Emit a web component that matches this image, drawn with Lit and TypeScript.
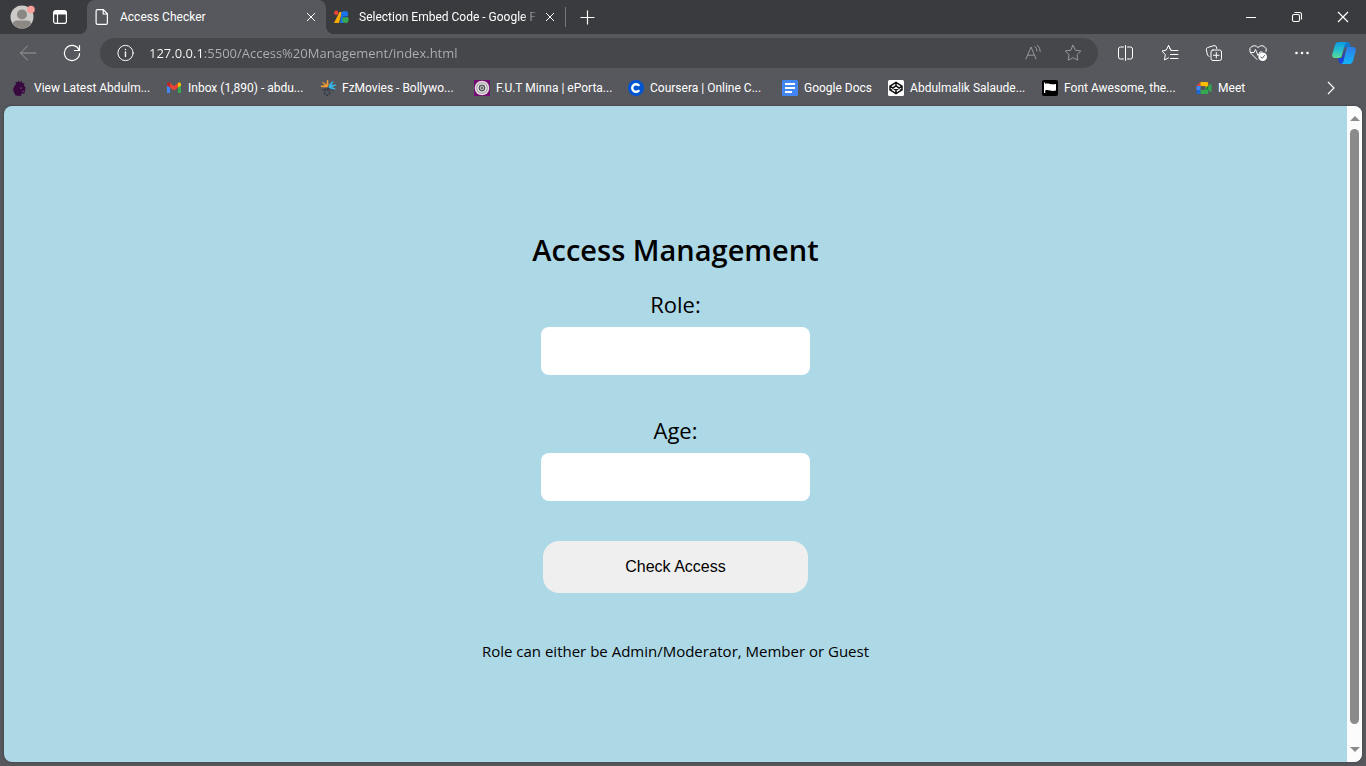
import { LitElement, html, css, svg, nothing, TemplateResult } from "lit";
import { customElement, state } from "lit/decorators.js";

interface Bookmark {
  label: string;
  long: boolean;
  icon: TemplateResult;
}

const bookmarks: Bookmark[] = [
  {
    label: "View Latest Abdulm...",
    long: true,
    icon: svg`<path fill="#37093f" d="M4 4 3.500 1.500 5.500 2.500 6.500 0.500 8 2.200 10 1 10.200 3.200 12.500 3 11.800 5.200 13.500 7.500 13 10 12.500 13.500 9.500 13.500 9 16 3.500 15.500 1.800 12 1 9 2.500 6Z"/><path fill="#6d3a73" d="M8 7.500h2v1.200H8zM10 11h2v1h-2z"/>`,
  },
  {
    label: "Inbox (1,890) - abdu...",
    long: true,
    icon: svg`<path fill="#4285f4" d="M1 4.500v8.500h3V7z"/><path fill="#34a853" d="M15 4.500v8.500h-3V7z"/><path fill="#c5221f" d="M1 4.500C1 2.500 3 2 4.200 3L4 7.500 1 5.500z"/><path fill="#fbbc04" d="M15 4.500c0-2-2-2.500-3.200-1.500L12 7.500l3-2z"/><path fill="#ea4335" d="m4 3 4 3.200L12 3v4.500l-4 3-4-3z"/>`,
  },
  {
    label: "FzMovies - Bollywo...",
    long: true,
    icon: svg`<path fill="#f29a38" d="M7.500 7.500 1 7l-.5-1.200L5 5 2 2.500l1-.5 3.500 2.500L7 0h1.200l.3 5z"/><path fill="#36b5e8" d="m8.500 8 1-4 3.500-3 .5 1-2.300 3L16 4.500v1L12 7l3.500 1.500-.3 1L10 9z"/><path fill="none" stroke="#36424f" stroke-width="1.300" d="m8 8-6 2m6-2 6 3"/><circle cx="7" cy="12.500" r="2.600" fill="none" stroke="#303945" stroke-width="1.600" stroke-dasharray="2 1"/>`,
  },
  {
    label: "F.U.T Minna | ePorta...",
    long: true,
    icon: svg`<path fill="#730b72" d="M0 0h16v16H0z"/><circle cx="8" cy="8" r="7.300" fill="#e2dcd8"/><circle cx="8" cy="8" r="5.200" fill="#fff" stroke="#a39ca8" stroke-width="1.200"/><circle cx="8" cy="8" r="2.800" fill="#bbb" stroke="#4c4c55" stroke-width="1.200"/><circle cx="8" cy="8" r="1" fill="#444"/>`,
  },
  {
    label: "Coursera | Online C...",
    long: true,
    icon: svg`<circle cx="8" cy="8" r="8" fill="#0056d2"/><path fill="none" stroke="#fff" stroke-width="2.400" d="M11.200 5.900a3.800 3.800 0 1 0 0 4.200"/>`,
  },
  {
    label: "Google Docs",
    long: false,
    icon: svg`<rect width="16" height="16" rx="1.500" fill="#4285f4"/><path stroke="#fff" stroke-width="1.800" d="M3 4h10M3 8h10M3 12h7"/>`,
  },
  {
    label: "Abdulmalik Salaude...",
    long: true,
    icon: svg`<rect width="16" height="16" rx="1.500" fill="#fff"/><path fill="none" stroke="#111" stroke-width="1.500" stroke-linejoin="round" d="m8 2.300 6 3.800v3.800l-6 3.800-6-3.800V6.100zM8 2.300v3.500M8 10.200v3.500M2 6.100l6 4.100 6-4.100M2 9.900l6-4.100 6 4.100"/>`,
  },
  {
    label: "Font Awesome, the...",
    long: true,
    icon: svg`<rect width="16" height="16" rx="2" fill="#000"/><path stroke="#fff" stroke-width="1.200" d="M2.600 2.500V13"/><path fill="#fff" d="M3 4c4-1.500 5 1.200 11 0v6.500c-5 1.500-7-1.400-11 0z"/>`,
  },
  {
    label: "Meet",
    long: false,
    icon: svg`<path fill="#ea4335" d="M4.500 2v4H.5z"/><path fill="#fbbc04" d="M4.500 2H11q1.200 0 1.200 1.200V7L9.500 8.500V6h-5z"/><path fill="#4285f4" d="M.5 6h4v4h-4z"/><path fill="#1967d2" d="M.5 10h4v4H1.700Q.5 14 .5 12.800z"/><path fill="#34a853" d="M4.500 10h5V8l2.700-1.500L14.800 4q.7-.4.700.4v7.200q0 .8-.7.400L12.200 10v2.800Q12.200 14 11 14H4.500z"/><path fill="#188038" d="m9.500 8 2.700-2.500v5z"/>`,
  },
];

const icon = (size: number, body: TemplateResult) => html`<svg
  class="icon"
  width=${size}
  height=${size}
  viewBox="0 0 ${size} ${size}"
  aria-hidden="true"
>${body}</svg>`;

const closeGlyph = svg`<path d="m2 2 8 8m0-8-8 8"/>`;

@customElement("browser-tabs")
class BrowserTabs extends LitElement {
  static styles = css`
    :host {
      display: flex;
      height: 34px;
      background: #3a3b3e;
      color: #fff;
      font: 12px/16px Roboto, "Open Sans", sans-serif;
    }
    button {
      display: flex;
      align-items: center;
      justify-content: center;
      padding: 0;
      border: 0;
      background: none;
      color: inherit;
      font: inherit;
    }
    .icon {
      flex: none;
      fill: none;
      stroke: currentColor;
      stroke-width: 1.2;
    }
    .tools {
      display: flex;
      width: 87px;
      padding-left: 10px;
      box-sizing: border-box;
    }
    .profile {
      width: 26px;
    }
    .workspaces {
      width: 48px;
    }
    .tab {
      position: relative;
      display: flex;
      align-items: center;
      width: 239px;
      height: 34px;
      box-sizing: border-box;
      padding: 0 3px 0 7px;
    }
    .tab.active {
      background: #57585d;
      border-radius: 8px 8px 0 0;
    }
    .tab.active::before,
    .tab.active::after {
      content: "";
      position: absolute;
      bottom: 0;
      width: 8px;
      height: 8px;
    }
    .tab.active::before {
      right: 100%;
      background: radial-gradient(circle at 0 0, transparent 8px, #57585d 8px);
    }
    .tab.active::after {
      left: 100%;
      background: radial-gradient(circle at 100% 0, transparent 8px, #57585d 8px);
    }
    .select {
      flex: 1;
      min-width: 0;
      height: 34px;
      justify-content: flex-start;
      gap: 10px;
    }
    .title {
      flex: 1;
      text-align: left;
      white-space: nowrap;
      overflow: hidden;
    }
    .faded {
      mask-image: linear-gradient(to left, transparent, #000 16px);
    }
    .close {
      width: 24px;
      height: 24px;
    }
    .close .icon {
      stroke-width: 1;
    }
    .separator {
      width: 1px;
      height: 20px;
      margin-top: 7px;
      background: #77787c;
    }
    .new {
      width: 42px;
    }
    .window {
      display: flex;
      margin-left: auto;
    }
    .window button {
      width: 46px;
    }
  `;

  render() {
    return html`
      <div class="tools">
        <button class="profile" aria-label="Profile">
          ${icon(26, svg`<g stroke="none"><circle cx="12" cy="13" r="11.500" fill="#cdcbc8"/><circle cx="12" cy="10.500" r="5" fill="#8b8883"/><path fill="#8b8883" d="M3 20c0-4 4-3.500 9-3.500s9-.5 9 3.500a11.500 11.500 0 0 1-18 0z"/><circle cx="21" cy="5.500" r="3.800" fill="#f9a09c"/></g>`)}
        </button>
        <button class="workspaces" aria-label="Tab actions">
          ${icon(16, svg`<rect x="1.600" y="1.600" width="12.800" height="12.800" rx="2.200"/><path fill="currentColor" stroke="none" d="M2 2h12v3.500H2z"/><path d="M5.500 5v9"/>`)}
        </button>
      </div>
      <div class="tab active">
        <button class="select">
          ${icon(16, svg`<path d="M3.500.6h5.800l4.100 4.200v9.200q0 1.400-1.400 1.400H3.500q-1.400 0-1.400-1.400V2Q2.100.6 3.500.6zM9.200.8V5h4"/>`)}
          <span class="title">Access Checker</span>
        </button>
        <button class="close" aria-label="Close tab">${icon(12, closeGlyph)}</button>
      </div>
      <div class="tab">
        <button class="select">
          ${icon(16, svg`<g stroke="none"><circle cx="3.200" cy="3.800" r="2.200" fill="#ea4335"/><path fill="#f9ab00" d="M6.500 3H9L6 14H1z"/><path fill="#1a73e8" d="M8.500 3 11 2v12H7z"/><circle cx="12.200" cy="5" r="3" fill="#1a73e8"/><circle cx="12.400" cy="10.800" r="3.200" fill="#34a853"/><path fill="#174ea6" d="M10 7h4v1.300h-4z"/></g>`)}
          <span class="title faded">Selection Embed Code - Google F</span>
        </button>
        <button class="close" aria-label="Close tab">${icon(12, closeGlyph)}</button>
      </div>
      <span class="separator"></span>
      <button class="new" aria-label="New tab">${icon(16, svg`<path d="M8.500 1.500v14M1.500 8.500h14"/>`)}</button>
      <div class="window">
        <button aria-label="Minimize">${icon(12, svg`<path d="M1 6.500h10" stroke-width="1"/>`)}</button>
        <button aria-label="Restore">
          ${icon(12, svg`<g stroke-width="1.100"><rect x="1.500" y="3.500" width="7" height="7" rx="1.500"/><path d="M3.500 1.500H8.500q2 0 2 2v5"/></g>`)}
        </button>
        <button aria-label="Close">${icon(12, svg`<path d="m1 1 10 10m0-10L1 11"/>`)}</button>
      </div>
    `;
  }
}

@customElement("browser-toolbar")
class BrowserToolbar extends LitElement {
  static styles = css`
    :host {
      display: flex;
      align-items: center;
      height: 38px;
      padding: 0 2px 0 6px;
      background: #57585d;
      color: #fff;
    }
    button {
      display: flex;
      align-items: center;
      justify-content: center;
      width: 44px;
      height: 30px;
      padding: 0;
      border: 0;
      background: none;
      color: inherit;
    }
    .icon {
      flex: none;
      fill: none;
      stroke: currentColor;
      stroke-width: 1;
      stroke-linejoin: round;
      stroke-linecap: round;
    }
    .muted {
      color: #97989b;
    }
    .address {
      flex: 1;
      display: flex;
      align-items: center;
      height: 30px;
      margin: 0 6px;
      padding: 0 5px;
      border-radius: 15px;
      background: #46474b;
    }
    .address button {
      width: 40px;
    }
    .url {
      flex: 1;
      min-width: 0;
      height: 24px;
      padding: 0 0 0 4px;
      border: 0;
      outline: 0;
      font: 13px/20px "Open Sans", "Noto Sans", sans-serif;
      color: transparent;
      background: linear-gradient(to right, #fff 58px, #b0b1b3 58px);
      background-clip: text;
      -webkit-background-clip: text;
    }
    .copilot {
      width: 40px;
    }
  `;

  render() {
    return html`
      <button class="muted" aria-label="Back">${icon(18, svg`<path d="M17 9H1.500M8.500 2 1.500 9l7 7"/>`)}</button>
      <button aria-label="Refresh">
        ${icon(18, svg`<path stroke-width="1.200" d="M16.200 6.500A7.600 7.600 0 1 0 16.600 9.500M16.500 1.500v5h-5"/>`)}
      </button>
      <div class="address">
        <button aria-label="Site information">
          ${icon(18, svg`<circle cx="9.500" cy="9" r="7.600"/><path stroke-width="1.400" d="M9.500 8v4.500M9.500 5.400v.2"/>`)}
        </button>
        <input class="url" aria-label="Address" value="127.0.0.1:5500/Access%20Management/index.html" />
        <button class="muted" aria-label="Read aloud">
          ${icon(18, svg`<path d="M2 15 7 3l5 12M3.600 11.200h6.800M11 2.500q2 1.800 2 4.500M13.500 1.200q2.800 2.600 2.800 6.500"/>`)}
        </button>
        <button class="muted" aria-label="Add to favorites">
          ${icon(18, svg`<path d="m9 1.300 2.400 4.900 5.400.8-3.900 3.800.9 5.400L9 13.700l-4.800 2.500.9-5.400L1.200 7l5.400-.8z"/>`)}
        </button>
      </div>
      <button aria-label="Split screen">
        ${icon(18, svg`<path d="M6.500 3H3.500Q1.500 3 1.500 5v8q0 2 2 2h3M10.500 3h3q2 0 2 2v8q0 2-2 2h-3M8.500 1.500v15"/>`)}
      </button>
      <button aria-label="Favorites">
        ${icon(18, svg`<path d="M10.500 6.200H9.800L7.500 1.500 5.200 6.200 1 7l3.300 3.500-.8 5.500 4-2.200M7.500 1.500l2.300 4.700M10.500 6.500H17M9.500 10.500H17M9.500 14.500H17"/>`)}
      </button>
      <button aria-label="Collections">
        ${icon(18, svg`<path d="M4 12.500 2.500 11 1.300 5.800Q1 4 2.700 3.500L9 1.600q1.800-.4 2.300 1.300l.4 1.600"/><rect x="6" y="6" width="10.500" height="10.500" rx="2"/><path d="M11.300 8.500v5.500M8.500 11.300H14"/>`)}
      </button>
      <button aria-label="Browser essentials">
        ${icon(18, svg`<path d="M8 15.500 2 9.500Q.2 7 1 4.500 2.500 1.500 5.500 1.700 7.500 1.800 9 3.600 10.500 1.800 12.500 1.700 15.500 1.500 17 4.500 17.500 6 17 7.500M1.500 8.500H5l1.500-3 2.500 6L11 8h2"/><circle cx="13.700" cy="12.800" r="4.300" fill="#fff" stroke="none"/><path stroke="#57585d" d="m11.800 12.900 1.400 1.400 2.400-2.800"/>`)}
      </button>
      <button aria-label="Settings and more">
        ${icon(18, svg`<g fill="currentColor" stroke="none"><circle cx="3.500" cy="9" r="1.300"/><circle cx="9" cy="9" r="1.300"/><circle cx="14.500" cy="9" r="1.300"/></g>`)}
      </button>
      <button class="copilot" aria-label="Copilot">
        ${icon(24, svg`
          <defs>
            <linearGradient id="teal" x1="0" y1="0" x2="0" y2="1"><stop offset="0" stop-color="#0a9be4"/><stop offset=".55" stop-color="#28c1c9"/><stop offset="1" stop-color="#5fdc95"/></linearGradient>
            <linearGradient id="blue" x1="0" y1="0" x2="0" y2="1"><stop offset="0" stop-color="#2f7be8"/><stop offset="1" stop-color="#14b4f7"/></linearGradient>
          </defs>
          <g stroke="none">
            <path fill="#1378cc" d="M11 1h4.500q2 0 2.600 2L19 6h-3.500q-2 0-2.700 2z"/>
            <path fill="#1b44d8" d="M6 17h4l3-9-1 12-1.500 3H9.200q-1.600 0-2.200-2z"/>
            <path fill="url(#teal)" d="M6.500 1H15q-1.600.5-2.200 2.500L9.700 15q-.6 2-2.600 2H3Q-.5 17 .3 13L3 4q1-3 3.500-3z"/>
            <path fill="url(#blue)" d="M15.500 6H21q3.500 0 2.700 4L21 20q-1 3-3.500 3H9q1.800-.5 2.400-2.500L14.500 8q.3-1.500 1-2z"/>
          </g>`)}
      </button>
    `;
  }
}

@customElement("bookmark-bar")
class BookmarkBar extends LitElement {
  static styles = css`
    :host {
      display: flex;
      align-items: center;
      gap: 16px;
      height: 32px;
      padding: 0 20px 2px 12px;
      background: #57585d;
      color: #fff;
      font: 12px/16px Roboto, "Open Sans", sans-serif;
    }
    .bookmark {
      display: flex;
      flex: none;
      align-items: center;
      gap: 6px;
      min-width: 90px;
      color: inherit;
      text-decoration: none;
      white-space: nowrap;
    }
    .long {
      width: 138px;
    }
    .icon {
      flex: none;
    }
    .more {
      display: flex;
      margin-left: auto;
      padding: 2px 7px;
      border: 0;
      background: none;
      color: inherit;
    }
  `;

  render() {
    return html`
      ${bookmarks.map(
        (b) => html`<a class="bookmark ${b.long ? "long" : ""}" href="#">${icon(16, b.icon)}<span>${b.label}</span></a>`
      )}
      <button class="more" aria-label="More favorites">
        ${icon(16, svg`<path fill="none" stroke="currentColor" stroke-width="1.200" d="m5 2 6 6-6 6"/>`)}
      </button>
    `;
  }
}

@customElement("access-form")
class AccessForm extends LitElement {
  static styles = css`
    :host {
      display: block;
    }
    .form {
      display: flex;
      flex-direction: column;
      align-items: center;
      color: #000;
      font: 15px/20px "Open Sans", "Noto Sans", sans-serif;
    }
    .heading {
      margin: 0 0 20px;
      font-size: 29px;
      line-height: 38px;
      font-weight: 600;
    }
    .field {
      display: flex;
      flex-direction: column;
      align-items: center;
      gap: 8px;
      margin-bottom: 40px;
    }
    .label {
      font-size: 22px;
      line-height: 30px;
    }
    .input {
      width: 269px;
      height: 48px;
      box-sizing: border-box;
      padding: 0 16px;
      border: 0;
      border-radius: 8px;
      background: #fff;
      font: inherit;
    }
    .submit {
      width: 265px;
      height: 52px;
      margin-bottom: 48px;
      border: 0;
      border-radius: 16px;
      background: #efefef;
      color: #000;
      font: 16px "Liberation Sans", Arial, sans-serif;
    }
    .note {
      margin: 0;
    }
  `;

  @state() private message = "Role can either be Admin/Moderator, Member or Guest";

  private check(event: Event) {
    event.preventDefault();
  }

  render() {
    return html`
      <form class="form" @submit=${this.check}>
        <h1 class="heading">Access Management</h1>
        <div class="field">
          <label class="label" for="role">Role:</label>
          <input class="input" id="role" type="text" />
        </div>
        <div class="field">
          <label class="label" for="age">Age:</label>
          <input class="input" id="age" type="text" inputmode="numeric" />
        </div>
        <button class="submit" type="submit">Check Access</button>
        ${this.message ? html`<p class="note">${this.message}</p>` : nothing}
      </form>
    `;
  }
}

@customElement("app-root")
class AppRoot extends LitElement {
  static styles = css`
    :host {
      display: flex;
      flex-direction: column;
      height: 100vh;
      background: #57585d;
    }
    .viewport {
      flex: 1;
      display: flex;
      min-height: 0;
      margin: 0 4px 4px;
      border-radius: 8px;
      overflow: hidden;
      background: #add8e6;
      box-shadow: 0 0 3px #3c3d40;
    }
    .page {
      flex: 1;
      display: flex;
      align-items: center;
      justify-content: center;
      padding-top: 24px;
    }
    .scrollbar {
      display: flex;
      flex-direction: column;
      align-items: center;
      gap: 8px;
      width: 15px;
      padding: 9px 0;
      box-sizing: border-box;
      background: #fcfcfc;
    }
    .thumb {
      width: 9px;
      flex: 1;
      margin-bottom: 15px;
      border-radius: 5px;
      background: #8b8b8b;
    }
    .arrow {
      fill: #8b8b8b;
    }
  `;

  render() {
    return html`
      <browser-tabs></browser-tabs>
      <browser-toolbar></browser-toolbar>
      <bookmark-bar></bookmark-bar>
      <main class="viewport">
        <div class="page"><access-form></access-form></div>
        <div class="scrollbar">
          <svg class="arrow" width="10" height="6" viewBox="0 0 10 6"><path d="M0 6 5 1l5 5z" /></svg>
          <div class="thumb"></div>
          <svg class="arrow" width="10" height="6" viewBox="0 0 10 6"><path d="m0 0 5 5 5-5z" /></svg>
        </div>
      </main>
    `;
  }
}
